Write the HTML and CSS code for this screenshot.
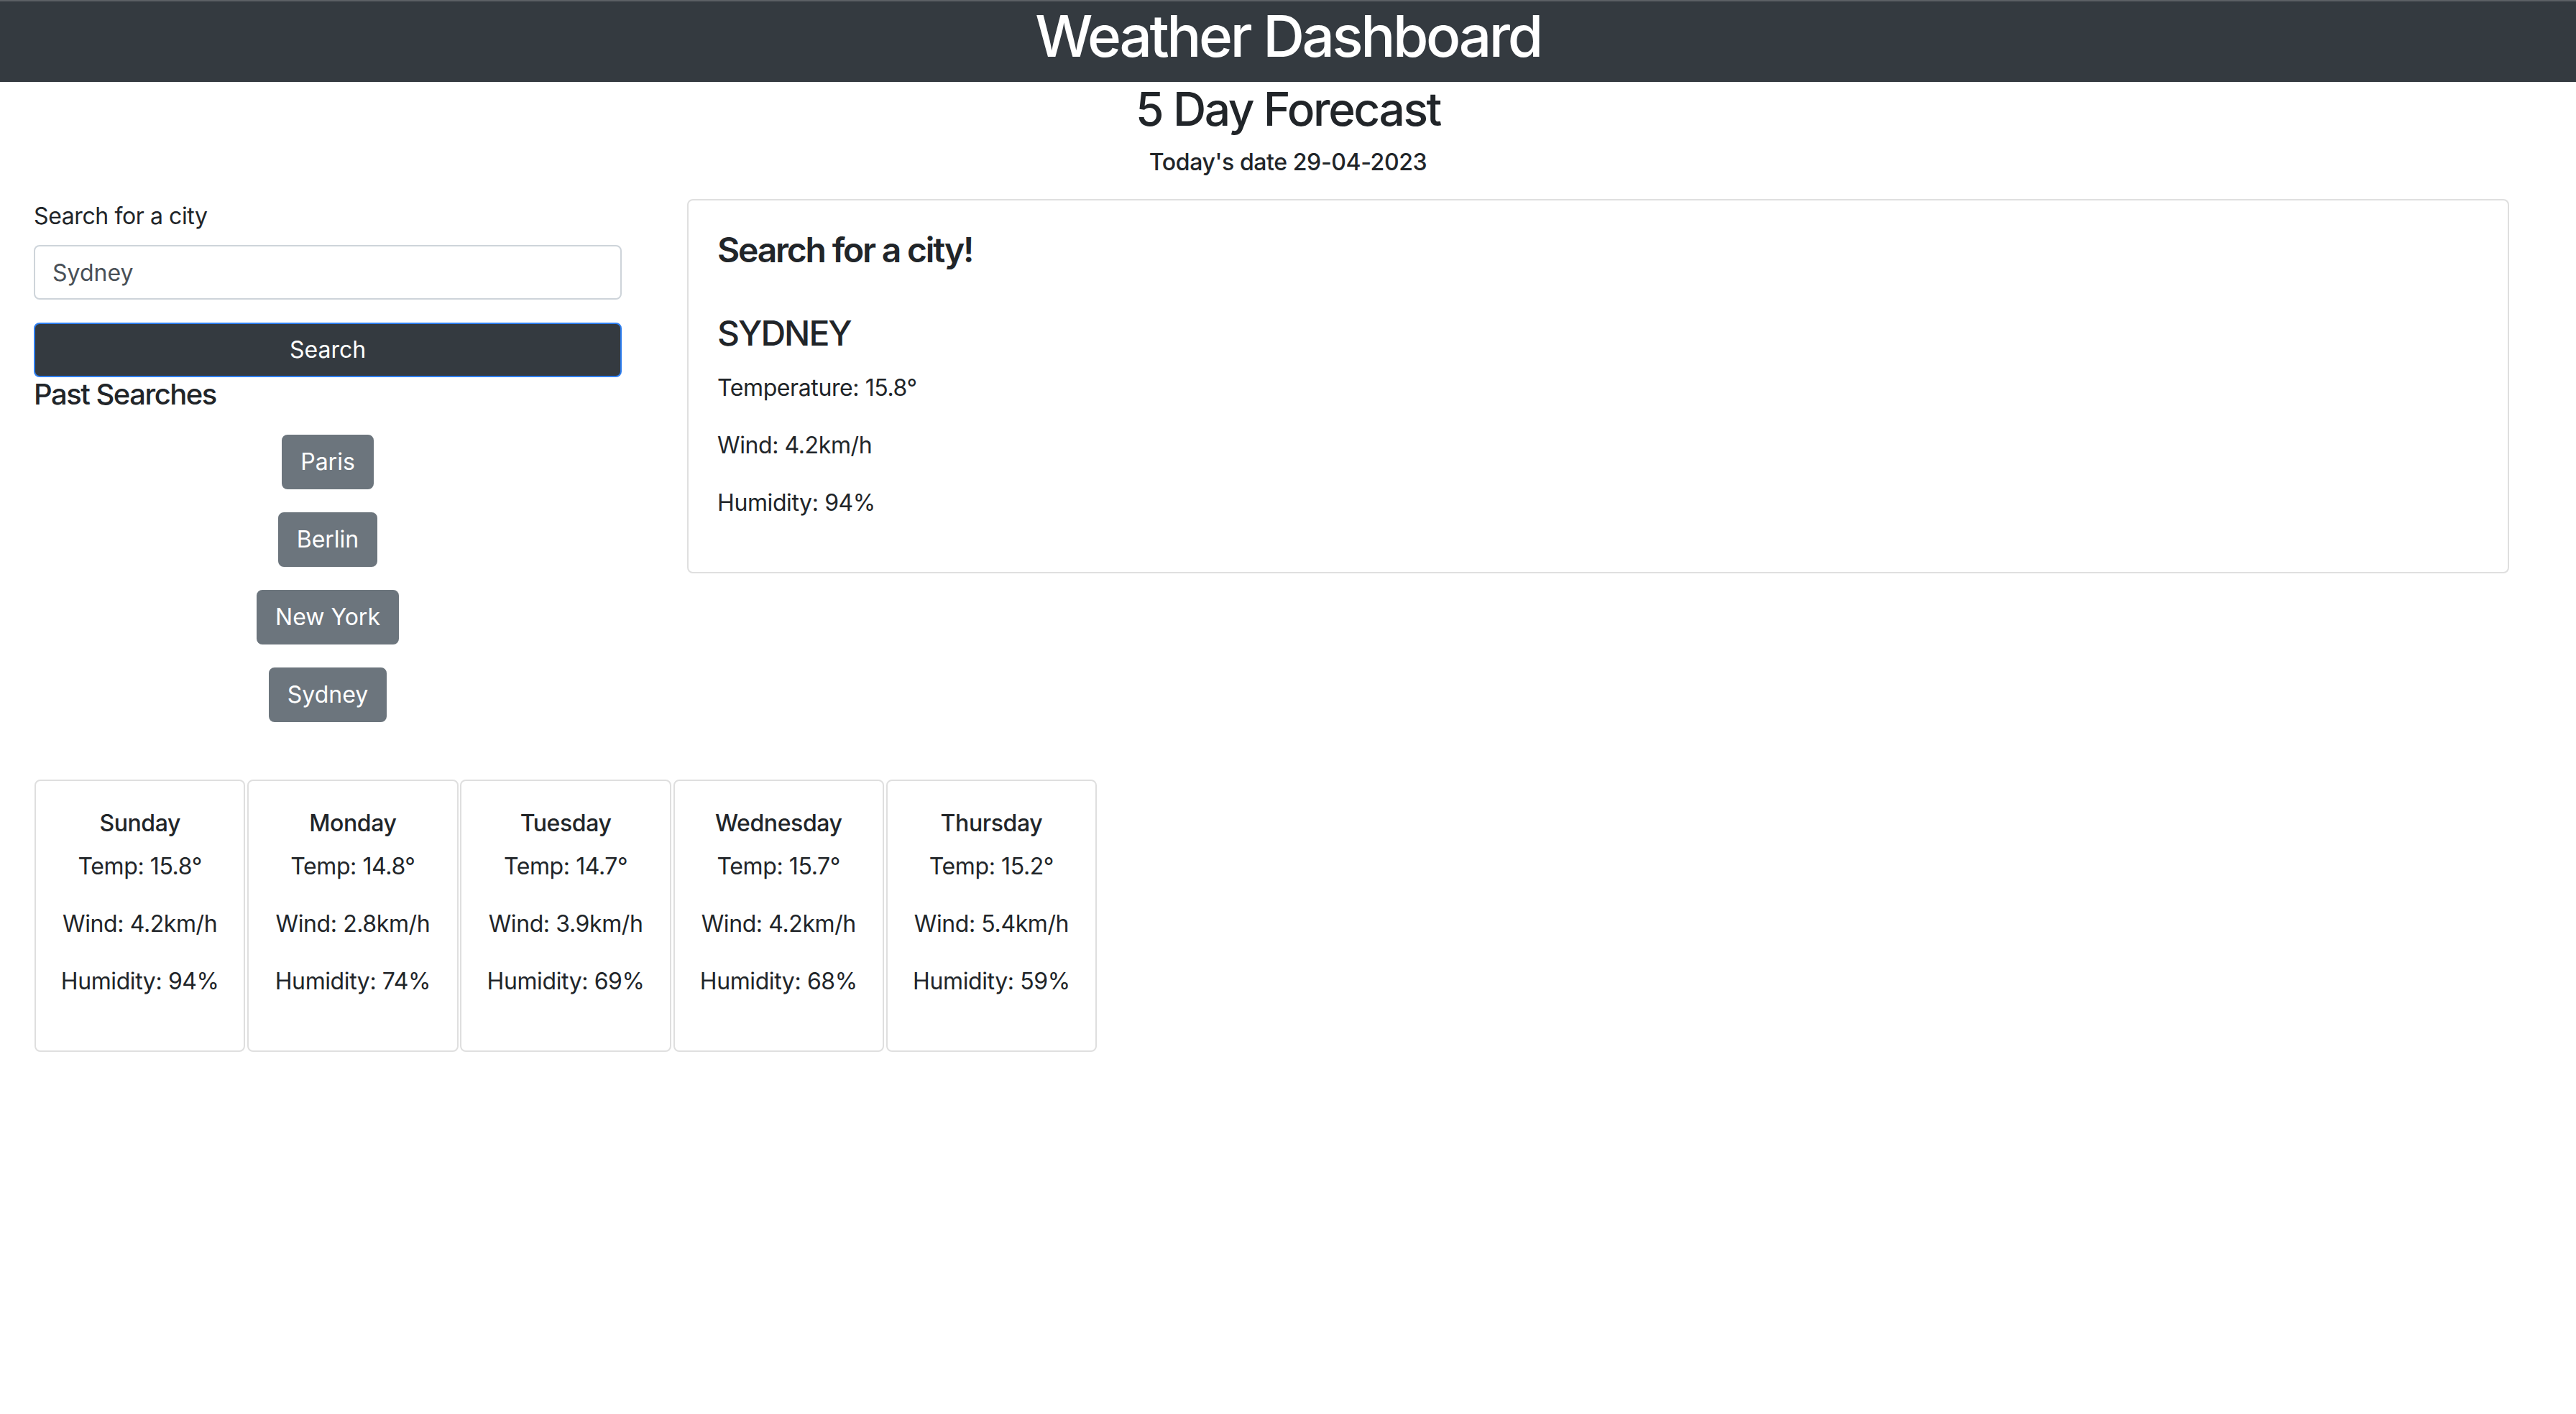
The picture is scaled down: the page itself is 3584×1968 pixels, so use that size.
FILE: index.html
```html
<!DOCTYPE html>
<html lang="en">
<head>
<meta charset="utf-8">
<title>Weather Dashboard</title>
<link rel="stylesheet" href="styles.css">
</head>
<body>
<header class="topbar">
  <h1 class="topbar-title">Weather Dashboard</h1>
</header>
<h2 class="page-title">5 Day Forecast</h2>
<p class="today">Today's date 29-04-2023</p>

<main class="layout">
  <aside class="sidebar">
    <form class="search-form">
      <label class="search-label" for="city">Search for a city</label>
      <input class="search-input" id="city" type="text" value="Sydney">
      <button class="search-btn" type="button">Search</button>
    </form>
    <h5 class="past-title">Past Searches</h5>
    <div class="past-list">
      <button class="past-btn" type="button">Paris</button>
      <button class="past-btn" type="button">Berlin</button>
      <button class="past-btn" type="button">New York</button>
      <button class="past-btn" type="button">Sydney</button>
    </div>
  </aside>

  <section class="current-card">
    <h4 class="current-prompt">Search for a city!</h4>
    <h4 class="current-city">SYDNEY</h4>
    <p class="stat">Temperature: 15.8°</p>
    <p class="stat">Wind: 4.2km/h</p>
    <p class="stat">Humidity: 94%</p>
  </section>
</main>

<section class="forecast">
  <div class="day-card">
    <h6 class="day-name">Sunday</h6>
    <p class="day-stat">Temp: 15.8°</p>
    <p class="day-stat">Wind: 4.2km/h</p>
    <p class="day-stat">Humidity: 94%</p>
  </div>
  <div class="day-card">
    <h6 class="day-name">Monday</h6>
    <p class="day-stat">Temp: 14.8°</p>
    <p class="day-stat">Wind: 2.8km/h</p>
    <p class="day-stat">Humidity: 74%</p>
  </div>
  <div class="day-card">
    <h6 class="day-name">Tuesday</h6>
    <p class="day-stat">Temp: 14.7°</p>
    <p class="day-stat">Wind: 3.9km/h</p>
    <p class="day-stat">Humidity: 69%</p>
  </div>
  <div class="day-card">
    <h6 class="day-name">Wednesday</h6>
    <p class="day-stat">Temp: 15.7°</p>
    <p class="day-stat">Wind: 4.2km/h</p>
    <p class="day-stat">Humidity: 68%</p>
  </div>
  <div class="day-card">
    <h6 class="day-name">Thursday</h6>
    <p class="day-stat">Temp: 15.2°</p>
    <p class="day-stat">Wind: 5.4km/h</p>
    <p class="day-stat">Humidity: 59%</p>
  </div>
</section>
</body>
</html>
```

FILE: styles.css
```css
html {
  zoom: 2;
}

* {
  box-sizing: border-box;
}

body {
  margin: 0;
  font-family: Inter, "Noto Sans", "Liberation Sans", sans-serif;
  font-size: 16px;
  line-height: 1.5;
  color: #212529;
  background: #fff;
  letter-spacing: -0.2px;
}

h1, h2, h4, h5, h6, p {
  margin: 0;
}

.topbar {
  background: #343a40;
  border-top: 1px solid #5b5f64;
  color: #fff;
  text-align: center;
  padding-bottom: 8px;
}

.topbar-title {
  font-size: 40px;
  font-weight: 500;
  line-height: 1.2;
  letter-spacing: -1.7px;
}

.page-title {
  font-size: 32px;
  font-weight: 500;
  line-height: 1.2;
  margin-bottom: 8px;
  text-align: center;
  letter-spacing: -1.2px;
}

.today {
  font-size: 16px;
  font-weight: 500;
  line-height: 1.2;
  margin-bottom: 16px;
  text-align: center;
}

.layout {
  display: flex;
  align-items: flex-start;
  gap: 45.5px;
  padding: 0 46.5px 0 23.5px;
}

.sidebar {
  width: 409px;
  flex: none;
}

.search-form {
  display: flex;
  flex-direction: column;
}

.search-label {
  line-height: 24px;
  margin-bottom: 8px;
}

.search-input {
  height: 38px;
  padding: 6px 12px;
  font: inherit;
  color: #495057;
  border: 1px solid #ced4da;
  border-radius: 4px;
  margin-bottom: 16px;
  background: #fff;
}

.search-btn {
  height: 38px;
  font: inherit;
  color: #fff;
  background: #343a40;
  border: 1px solid #2f7ff0;
  border-radius: 4px;
}

.past-title {
  font-size: 20px;
  font-weight: 500;
  line-height: 1.2;
  margin-bottom: 8px;
  letter-spacing: -0.75px;
}

.past-list {
  display: flex;
  flex-direction: column;
  align-items: center;
}

.past-btn {
  height: 38px;
  margin: 8px 0;
  padding: 6px 12px;
  font: inherit;
  line-height: 24px;
  color: #fff;
  background: #6c757d;
  border: 1px solid #6c757d;
  border-radius: 4px;
}

.current-card {
  flex: 1;
  border: 1px solid #dfdfdf;
  border-radius: 4px;
  padding: 20px;
}

.current-prompt {
  font-size: 24px;
  font-weight: 600;
  line-height: 1.2;
  margin-bottom: 29px;
  letter-spacing: -1.1px;
}

.current-city {
  font-size: 24px;
  font-weight: 500;
  line-height: 1.2;
  margin-bottom: 12px;
  letter-spacing: -1px;
}

.stat {
  line-height: 24px;
  margin-bottom: 16px;
}

.forecast {
  display: flex;
  gap: 1.4px;
  padding: 32px 0 0 24px;
}

.day-card {
  width: 146.7px;
  border: 1px solid #dfdfdf;
  border-radius: 4px;
  padding: 20px 0 20px;
  text-align: center;
}

.day-name {
  font-size: 16px;
  font-weight: 500;
  line-height: 1.2;
  margin-bottom: 8px;
}

.day-stat {
  line-height: 24px;
  margin-bottom: 16px;
  white-space: nowrap;
}
```
